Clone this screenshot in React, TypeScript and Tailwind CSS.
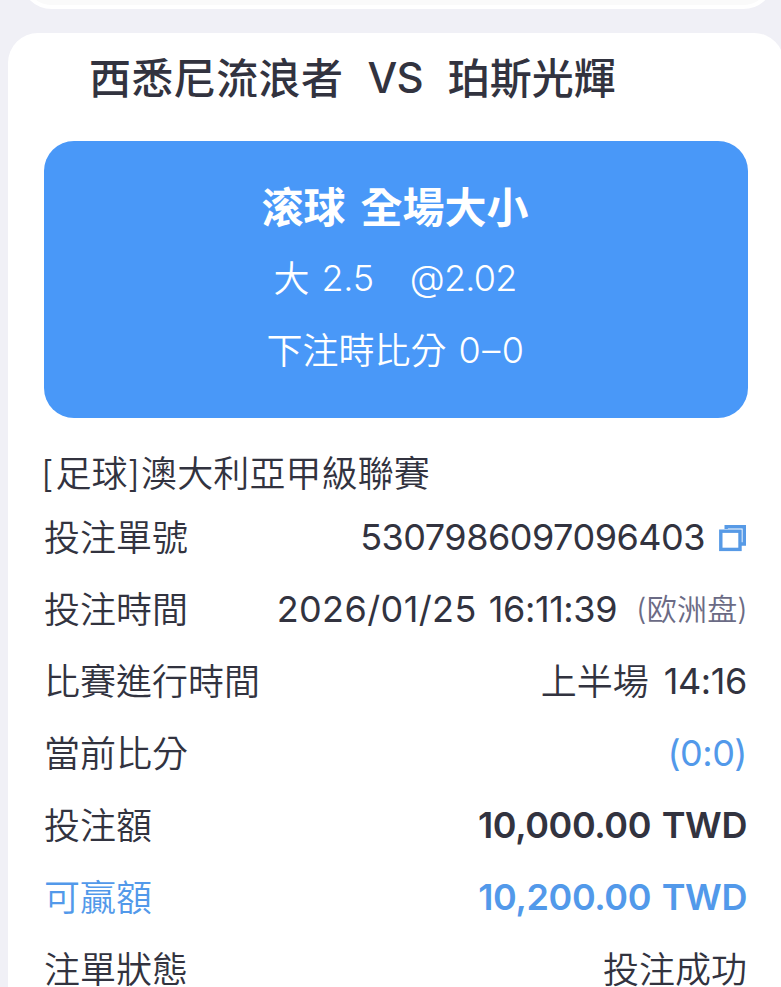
import React from 'react';
import { clsx } from 'clsx';

const CopyIcon = () => (
  <svg className="w-[28px] h-[28px] shrink-0" viewBox="0 0 28 28" fill="none" stroke="#579ae6" strokeWidth="3.4">
    <path d="M7.2 5V2.7H25.3V20H22" />
    <rect x="1.8" y="7.2" width="19.2" height="18.2" />
  </svg>
);

interface RowProps {
  label: string;
  accent?: boolean;
  children: React.ReactNode;
}

const Row = ({ label, accent, children }: RowProps) => (
  <div className={clsx('h-[72px] flex items-center justify-between', accent && 'text-[#5299ea]')}>
    <span>{label}</span>
    <div className="flex items-center pr-[1px]">{children}</div>
  </div>
);

export default function App() {
  return (
    <div className="w-[781px] h-[987px] overflow-hidden bg-[#f0f0f6] text-[#32333f] font-['Inter','Noto_Sans_CJK_TC',sans-serif] whitespace-nowrap">
      {/* Bottom edge of the previous card */}
      <div className="h-[9px] ml-5 flex flex-col justify-end overflow-hidden">
        <div className="h-[80px] w-[755px] shrink-0 rounded-[32px] bg-[#fafafa] border-4 border-white" />
      </div>

      {/* Bet card */}
      <div className="mt-6 ml-2 w-[776px] h-[1000px] bg-white rounded-[30px] pl-9 pr-9">
        <div className="h-[108px] pl-[45px] pb-[18px] flex items-center text-[42px] leading-none font-medium">
          <span className="pt-[1px] tracking-[0.4px]">西悉尼流浪者</span>
          <span className="ml-[24px] tracking-[-0.8px]">VS</span>
          <span className="ml-[25px] pt-[1px]">珀斯光輝</span>
        </div>

        <div className="h-[277px] rounded-[30px] bg-[#4998f8] text-white flex flex-col items-center pt-[30px]">
          <div className="h-[72px] pr-[2px] flex items-center text-[42px] font-bold">
            <span>滚球</span>
            <span className="ml-[15px]">全場大小</span>
          </div>
          <div className="h-[72px] pr-[2px] flex items-center text-[36px] font-[350]">
            <span>大</span>
            <span className="ml-[12px] pb-[2px] tracking-[-0.3px]">2.5</span>
            <span className="ml-[36px] pb-[2px] tracking-[-0.8px]">@2.02</span>
          </div>
          <div className="h-[72px] flex items-center text-[36px] font-[350]">
            <span>下注時比分</span>
            <span className="ml-[12px] pb-[2px] tracking-[1.5px]">0–0</span>
          </div>
        </div>

        {/* Details */}
        <div className="pt-[28px] text-[36px] leading-none font-[350]">
          <div className="h-[56px] ml-[-3px] flex items-center">
            <span>[</span>
            <span className="ml-[2px]">足球</span>
            <span>]</span>
            <span className="ml-[1px] tracking-[0.1px]">澳大利亞甲級聯賽</span>
          </div>
          <Row label="投注單號">
            <span className="pb-[2px] font-[390] tracking-[-0.5px]">5307986097096403</span>
            <span className="ml-[14px]"><CopyIcon /></span>
          </Row>
          <Row label="投注時間">
            <span className="pb-[2px] font-[390] tracking-[0.4px]">2026/01/25</span>
            <span className="ml-[12px] pb-[2px] font-[390] tracking-[-0.4px]">16:11:39</span>
            <span className="ml-[19px] mr-[-1px] pb-[2px] text-[30px] tracking-[0.2px] text-[#6b6b85]">(欧洲盘)</span>
          </Row>
          <Row label="比賽進行時間">
            <span>上半場</span>
            <span className="ml-[15px] pb-[2px] font-[390] tracking-[-0.4px]">14:16</span>
          </Row>
          <Row label="當前比分">
            <span className="pb-[2px] text-[#5299ea] font-[370] tracking-[-0.5px]">(0:0)</span>
          </Row>
          <Row label="投注額">
            <span className="pb-[2px] font-semibold tracking-[-0.4px] [word-spacing:2px]">10,000.00 TWD</span>
          </Row>
          <Row label="可贏額" accent>
            <span className="pb-[2px] font-semibold tracking-[-0.4px] [word-spacing:2px]">10,200.00 TWD</span>
          </Row>
          <Row label="注單狀態">
            <span>投注成功</span>
          </Row>
        </div>
      </div>
    </div>
  );
}
